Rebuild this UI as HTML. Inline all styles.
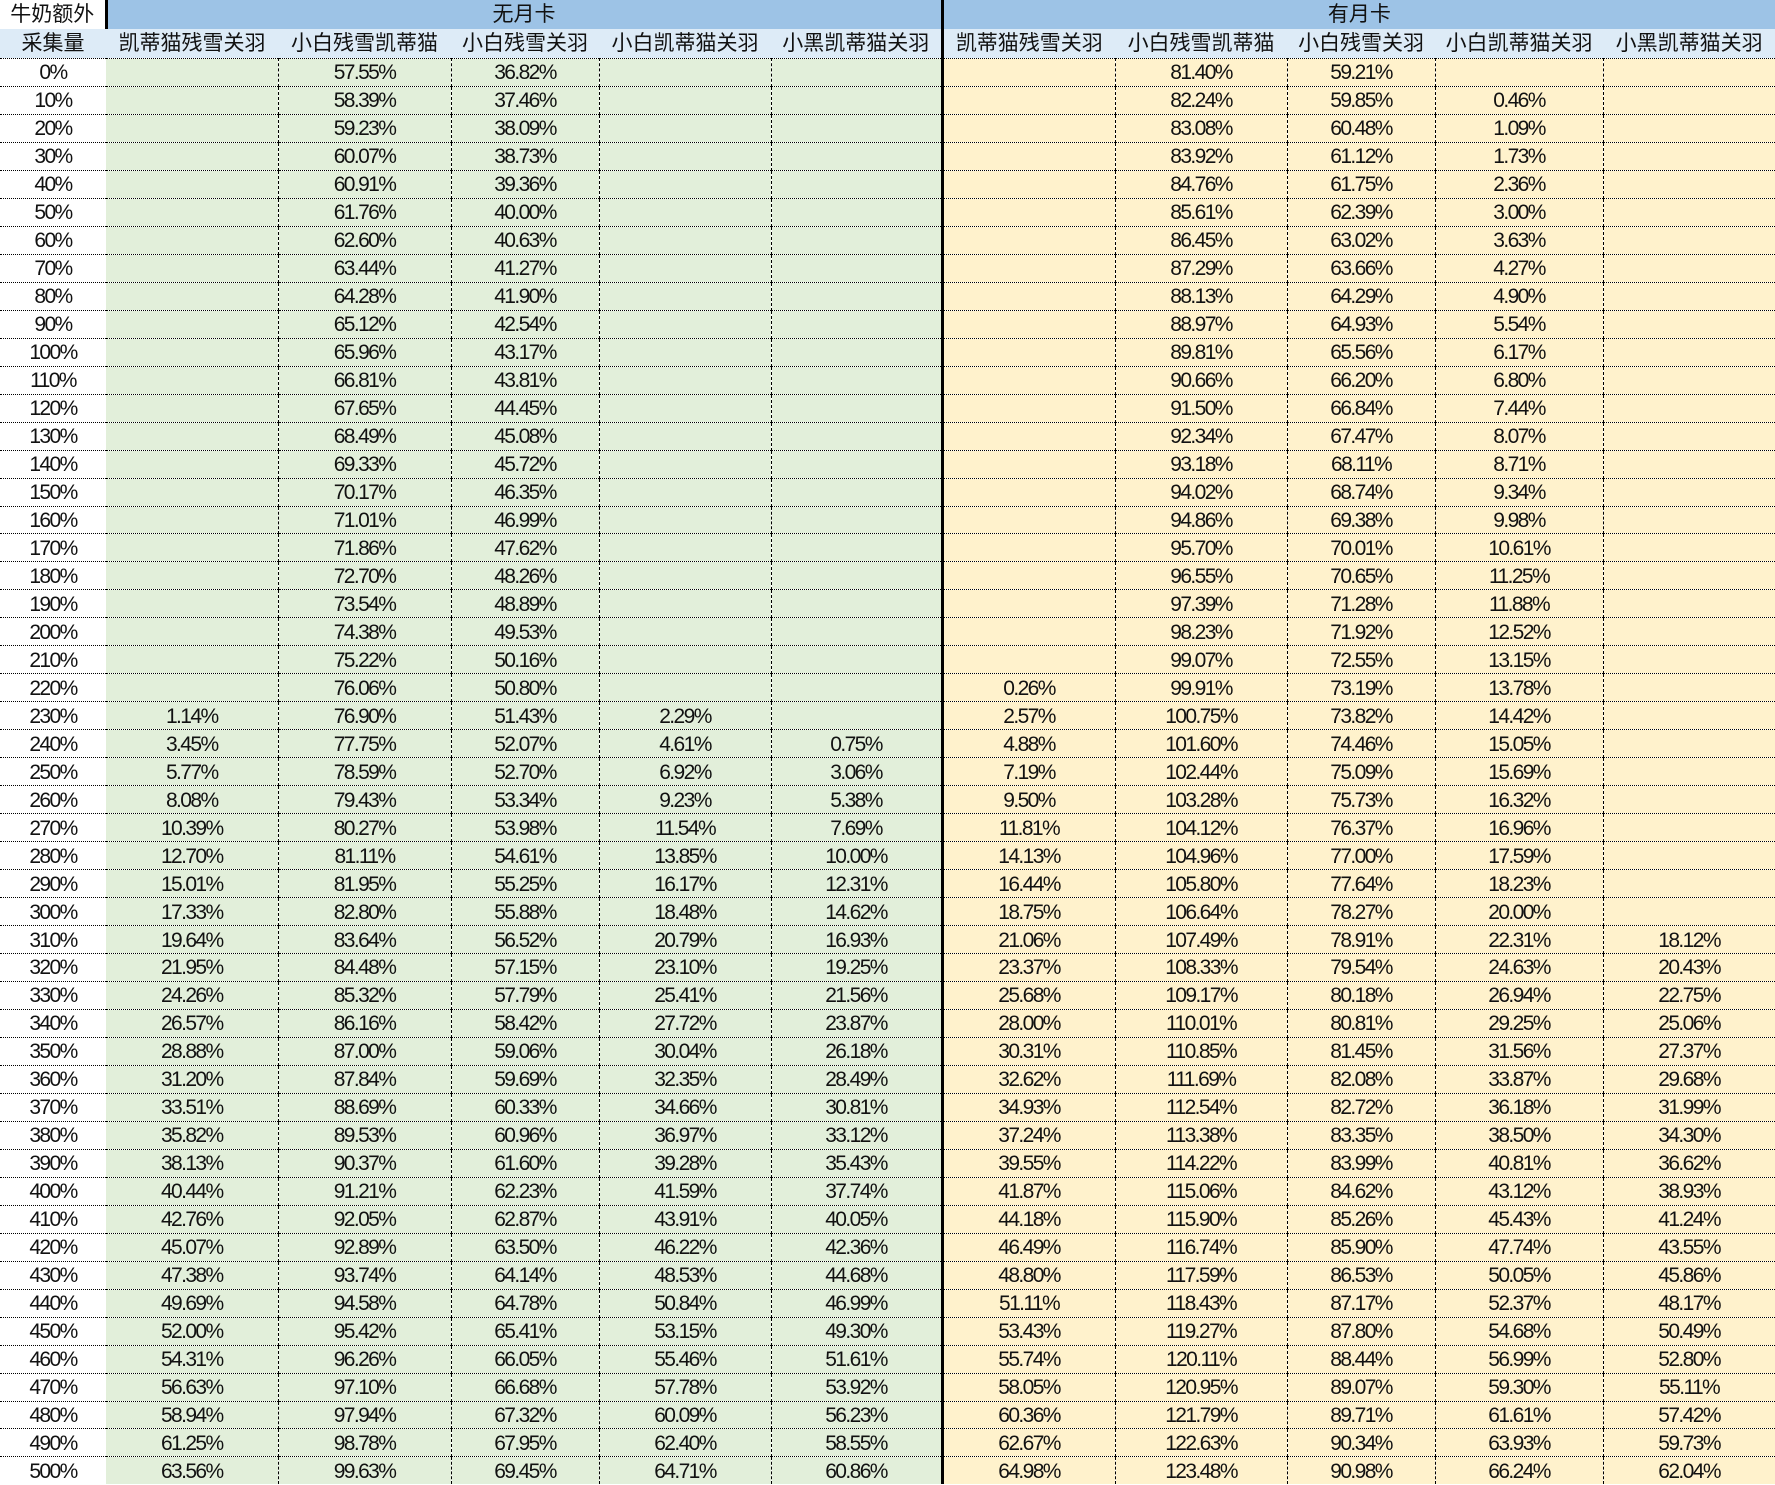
<!DOCTYPE html>
<html><head><meta charset="utf-8"><style>
html,body{margin:0;padding:0;background:#fff;}
body{width:1775px;height:1485px;overflow:hidden;}
table{border-collapse:collapse;table-layout:fixed;width:1775px;font-family:"Liberation Sans","Noto Sans CJK SC",sans-serif;color:#111;}
td{padding:0;text-align:center;white-space:nowrap;overflow:hidden;}
tr.h1 td{height:29px;font-size:21px;line-height:29px;}
tr.h2 td{height:29px;font-size:21px;line-height:29px;background:#ddebf7;}
tr.h1 td.b{background:#9dc3e6;}
tbody td{height:24.98px;font-size:21px;letter-spacing:-1.6px;background:#e2efda;border-top:1px dotted #000;border-right:1px dashed #000;line-height:24px;padding-top:2px;}
tbody td:first-child{background:#fff;border-right:none;}
tbody td:nth-child(n+7){background:#fff2cc;}
tbody td:nth-child(6){border-right:3px solid #000;}
.w{background:#fff;}
.tk{border-right:3px solid #000;}
</style></head><body>
<table>
<colgroup><col style="width:106px"><col style="width:172px"><col style="width:173px"><col style="width:148px"><col style="width:172px"><col style="width:171px"><col style="width:173px"><col style="width:172px"><col style="width:148px"><col style="width:168px"><col style="width:172px"></colgroup>
<thead>
<tr class="h1"><td class="w tk">牛奶额外</td><td class="b tk" colspan="5">无月卡</td><td class="b" colspan="5">有月卡</td></tr>
<tr class="h2"><td class="w">采集量</td><td>凯蒂猫残雪关羽</td><td>小白残雪凯蒂猫</td><td>小白残雪关羽</td><td>小白凯蒂猫关羽</td><td class="tk">小黑凯蒂猫关羽</td><td>凯蒂猫残雪关羽</td><td>小白残雪凯蒂猫</td><td>小白残雪关羽</td><td>小白凯蒂猫关羽</td><td>小黑凯蒂猫关羽</td></tr>
</thead>
<tbody>
<tr><td>0%</td><td></td><td>57.55%</td><td>36.82%</td><td></td><td></td><td></td><td>81.40%</td><td>59.21%</td><td></td><td></td></tr>
<tr><td>10%</td><td></td><td>58.39%</td><td>37.46%</td><td></td><td></td><td></td><td>82.24%</td><td>59.85%</td><td>0.46%</td><td></td></tr>
<tr><td>20%</td><td></td><td>59.23%</td><td>38.09%</td><td></td><td></td><td></td><td>83.08%</td><td>60.48%</td><td>1.09%</td><td></td></tr>
<tr><td>30%</td><td></td><td>60.07%</td><td>38.73%</td><td></td><td></td><td></td><td>83.92%</td><td>61.12%</td><td>1.73%</td><td></td></tr>
<tr><td>40%</td><td></td><td>60.91%</td><td>39.36%</td><td></td><td></td><td></td><td>84.76%</td><td>61.75%</td><td>2.36%</td><td></td></tr>
<tr><td>50%</td><td></td><td>61.76%</td><td>40.00%</td><td></td><td></td><td></td><td>85.61%</td><td>62.39%</td><td>3.00%</td><td></td></tr>
<tr><td>60%</td><td></td><td>62.60%</td><td>40.63%</td><td></td><td></td><td></td><td>86.45%</td><td>63.02%</td><td>3.63%</td><td></td></tr>
<tr><td>70%</td><td></td><td>63.44%</td><td>41.27%</td><td></td><td></td><td></td><td>87.29%</td><td>63.66%</td><td>4.27%</td><td></td></tr>
<tr><td>80%</td><td></td><td>64.28%</td><td>41.90%</td><td></td><td></td><td></td><td>88.13%</td><td>64.29%</td><td>4.90%</td><td></td></tr>
<tr><td>90%</td><td></td><td>65.12%</td><td>42.54%</td><td></td><td></td><td></td><td>88.97%</td><td>64.93%</td><td>5.54%</td><td></td></tr>
<tr><td>100%</td><td></td><td>65.96%</td><td>43.17%</td><td></td><td></td><td></td><td>89.81%</td><td>65.56%</td><td>6.17%</td><td></td></tr>
<tr><td>110%</td><td></td><td>66.81%</td><td>43.81%</td><td></td><td></td><td></td><td>90.66%</td><td>66.20%</td><td>6.80%</td><td></td></tr>
<tr><td>120%</td><td></td><td>67.65%</td><td>44.45%</td><td></td><td></td><td></td><td>91.50%</td><td>66.84%</td><td>7.44%</td><td></td></tr>
<tr><td>130%</td><td></td><td>68.49%</td><td>45.08%</td><td></td><td></td><td></td><td>92.34%</td><td>67.47%</td><td>8.07%</td><td></td></tr>
<tr><td>140%</td><td></td><td>69.33%</td><td>45.72%</td><td></td><td></td><td></td><td>93.18%</td><td>68.11%</td><td>8.71%</td><td></td></tr>
<tr><td>150%</td><td></td><td>70.17%</td><td>46.35%</td><td></td><td></td><td></td><td>94.02%</td><td>68.74%</td><td>9.34%</td><td></td></tr>
<tr><td>160%</td><td></td><td>71.01%</td><td>46.99%</td><td></td><td></td><td></td><td>94.86%</td><td>69.38%</td><td>9.98%</td><td></td></tr>
<tr><td>170%</td><td></td><td>71.86%</td><td>47.62%</td><td></td><td></td><td></td><td>95.70%</td><td>70.01%</td><td>10.61%</td><td></td></tr>
<tr><td>180%</td><td></td><td>72.70%</td><td>48.26%</td><td></td><td></td><td></td><td>96.55%</td><td>70.65%</td><td>11.25%</td><td></td></tr>
<tr><td>190%</td><td></td><td>73.54%</td><td>48.89%</td><td></td><td></td><td></td><td>97.39%</td><td>71.28%</td><td>11.88%</td><td></td></tr>
<tr><td>200%</td><td></td><td>74.38%</td><td>49.53%</td><td></td><td></td><td></td><td>98.23%</td><td>71.92%</td><td>12.52%</td><td></td></tr>
<tr><td>210%</td><td></td><td>75.22%</td><td>50.16%</td><td></td><td></td><td></td><td>99.07%</td><td>72.55%</td><td>13.15%</td><td></td></tr>
<tr><td>220%</td><td></td><td>76.06%</td><td>50.80%</td><td></td><td></td><td>0.26%</td><td>99.91%</td><td>73.19%</td><td>13.78%</td><td></td></tr>
<tr><td>230%</td><td>1.14%</td><td>76.90%</td><td>51.43%</td><td>2.29%</td><td></td><td>2.57%</td><td>100.75%</td><td>73.82%</td><td>14.42%</td><td></td></tr>
<tr><td>240%</td><td>3.45%</td><td>77.75%</td><td>52.07%</td><td>4.61%</td><td>0.75%</td><td>4.88%</td><td>101.60%</td><td>74.46%</td><td>15.05%</td><td></td></tr>
<tr><td>250%</td><td>5.77%</td><td>78.59%</td><td>52.70%</td><td>6.92%</td><td>3.06%</td><td>7.19%</td><td>102.44%</td><td>75.09%</td><td>15.69%</td><td></td></tr>
<tr><td>260%</td><td>8.08%</td><td>79.43%</td><td>53.34%</td><td>9.23%</td><td>5.38%</td><td>9.50%</td><td>103.28%</td><td>75.73%</td><td>16.32%</td><td></td></tr>
<tr><td>270%</td><td>10.39%</td><td>80.27%</td><td>53.98%</td><td>11.54%</td><td>7.69%</td><td>11.81%</td><td>104.12%</td><td>76.37%</td><td>16.96%</td><td></td></tr>
<tr><td>280%</td><td>12.70%</td><td>81.11%</td><td>54.61%</td><td>13.85%</td><td>10.00%</td><td>14.13%</td><td>104.96%</td><td>77.00%</td><td>17.59%</td><td></td></tr>
<tr><td>290%</td><td>15.01%</td><td>81.95%</td><td>55.25%</td><td>16.17%</td><td>12.31%</td><td>16.44%</td><td>105.80%</td><td>77.64%</td><td>18.23%</td><td></td></tr>
<tr><td>300%</td><td>17.33%</td><td>82.80%</td><td>55.88%</td><td>18.48%</td><td>14.62%</td><td>18.75%</td><td>106.64%</td><td>78.27%</td><td>20.00%</td><td></td></tr>
<tr><td>310%</td><td>19.64%</td><td>83.64%</td><td>56.52%</td><td>20.79%</td><td>16.93%</td><td>21.06%</td><td>107.49%</td><td>78.91%</td><td>22.31%</td><td>18.12%</td></tr>
<tr><td>320%</td><td>21.95%</td><td>84.48%</td><td>57.15%</td><td>23.10%</td><td>19.25%</td><td>23.37%</td><td>108.33%</td><td>79.54%</td><td>24.63%</td><td>20.43%</td></tr>
<tr><td>330%</td><td>24.26%</td><td>85.32%</td><td>57.79%</td><td>25.41%</td><td>21.56%</td><td>25.68%</td><td>109.17%</td><td>80.18%</td><td>26.94%</td><td>22.75%</td></tr>
<tr><td>340%</td><td>26.57%</td><td>86.16%</td><td>58.42%</td><td>27.72%</td><td>23.87%</td><td>28.00%</td><td>110.01%</td><td>80.81%</td><td>29.25%</td><td>25.06%</td></tr>
<tr><td>350%</td><td>28.88%</td><td>87.00%</td><td>59.06%</td><td>30.04%</td><td>26.18%</td><td>30.31%</td><td>110.85%</td><td>81.45%</td><td>31.56%</td><td>27.37%</td></tr>
<tr><td>360%</td><td>31.20%</td><td>87.84%</td><td>59.69%</td><td>32.35%</td><td>28.49%</td><td>32.62%</td><td>111.69%</td><td>82.08%</td><td>33.87%</td><td>29.68%</td></tr>
<tr><td>370%</td><td>33.51%</td><td>88.69%</td><td>60.33%</td><td>34.66%</td><td>30.81%</td><td>34.93%</td><td>112.54%</td><td>82.72%</td><td>36.18%</td><td>31.99%</td></tr>
<tr><td>380%</td><td>35.82%</td><td>89.53%</td><td>60.96%</td><td>36.97%</td><td>33.12%</td><td>37.24%</td><td>113.38%</td><td>83.35%</td><td>38.50%</td><td>34.30%</td></tr>
<tr><td>390%</td><td>38.13%</td><td>90.37%</td><td>61.60%</td><td>39.28%</td><td>35.43%</td><td>39.55%</td><td>114.22%</td><td>83.99%</td><td>40.81%</td><td>36.62%</td></tr>
<tr><td>400%</td><td>40.44%</td><td>91.21%</td><td>62.23%</td><td>41.59%</td><td>37.74%</td><td>41.87%</td><td>115.06%</td><td>84.62%</td><td>43.12%</td><td>38.93%</td></tr>
<tr><td>410%</td><td>42.76%</td><td>92.05%</td><td>62.87%</td><td>43.91%</td><td>40.05%</td><td>44.18%</td><td>115.90%</td><td>85.26%</td><td>45.43%</td><td>41.24%</td></tr>
<tr><td>420%</td><td>45.07%</td><td>92.89%</td><td>63.50%</td><td>46.22%</td><td>42.36%</td><td>46.49%</td><td>116.74%</td><td>85.90%</td><td>47.74%</td><td>43.55%</td></tr>
<tr><td>430%</td><td>47.38%</td><td>93.74%</td><td>64.14%</td><td>48.53%</td><td>44.68%</td><td>48.80%</td><td>117.59%</td><td>86.53%</td><td>50.05%</td><td>45.86%</td></tr>
<tr><td>440%</td><td>49.69%</td><td>94.58%</td><td>64.78%</td><td>50.84%</td><td>46.99%</td><td>51.11%</td><td>118.43%</td><td>87.17%</td><td>52.37%</td><td>48.17%</td></tr>
<tr><td>450%</td><td>52.00%</td><td>95.42%</td><td>65.41%</td><td>53.15%</td><td>49.30%</td><td>53.43%</td><td>119.27%</td><td>87.80%</td><td>54.68%</td><td>50.49%</td></tr>
<tr><td>460%</td><td>54.31%</td><td>96.26%</td><td>66.05%</td><td>55.46%</td><td>51.61%</td><td>55.74%</td><td>120.11%</td><td>88.44%</td><td>56.99%</td><td>52.80%</td></tr>
<tr><td>470%</td><td>56.63%</td><td>97.10%</td><td>66.68%</td><td>57.78%</td><td>53.92%</td><td>58.05%</td><td>120.95%</td><td>89.07%</td><td>59.30%</td><td>55.11%</td></tr>
<tr><td>480%</td><td>58.94%</td><td>97.94%</td><td>67.32%</td><td>60.09%</td><td>56.23%</td><td>60.36%</td><td>121.79%</td><td>89.71%</td><td>61.61%</td><td>57.42%</td></tr>
<tr><td>490%</td><td>61.25%</td><td>98.78%</td><td>67.95%</td><td>62.40%</td><td>58.55%</td><td>62.67%</td><td>122.63%</td><td>90.34%</td><td>63.93%</td><td>59.73%</td></tr>
<tr><td>500%</td><td>63.56%</td><td>99.63%</td><td>69.45%</td><td>64.71%</td><td>60.86%</td><td>64.98%</td><td>123.48%</td><td>90.98%</td><td>66.24%</td><td>62.04%</td></tr>
</tbody>
</table>
</body></html>
